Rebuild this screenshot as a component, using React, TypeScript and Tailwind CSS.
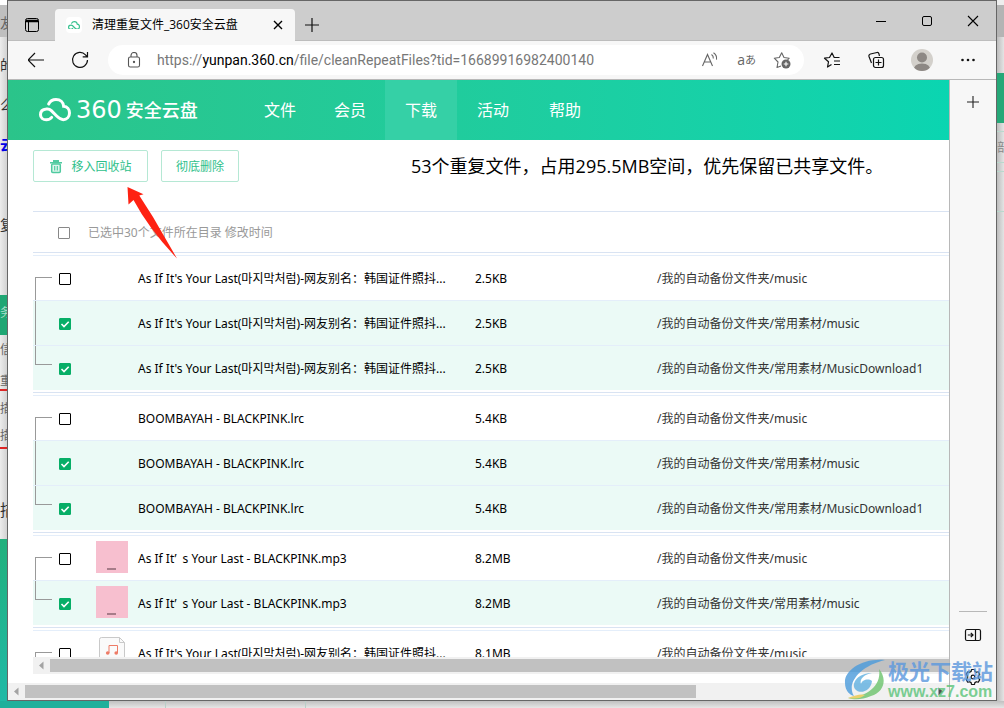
import { useState } from "react";
import type { ReactNode } from "react";

interface RepeatFile {
  id: string;
  name: string;
  size: string;
  path: string;
  thumb?: "cover" | "audio";
}

const ROOT = "/我的自动备份文件夹";
const LONG_NAME = "As If It's Your Last(마지막처럼)-网友别名：韩国证件照抖...";
const MP3_NAME = "As If It’\u2002s Your Last - BLACKPINK.mp3";

const groups: RepeatFile[][] = [
  [
    { id: "a1", name: LONG_NAME, size: "2.5KB", path: `${ROOT}/music` },
    { id: "a2", name: LONG_NAME, size: "2.5KB", path: `${ROOT}/常用素材/music` },
    { id: "a3", name: LONG_NAME, size: "2.5KB", path: `${ROOT}/常用素材/MusicDownload1` },
  ],
  [
    { id: "b1", name: "BOOMBAYAH - BLACKPINK.lrc", size: "5.4KB", path: `${ROOT}/music` },
    { id: "b2", name: "BOOMBAYAH - BLACKPINK.lrc", size: "5.4KB", path: `${ROOT}/常用素材/music` },
    { id: "b3", name: "BOOMBAYAH - BLACKPINK.lrc", size: "5.4KB", path: `${ROOT}/常用素材/MusicDownload1` },
  ],
  [
    { id: "c1", name: MP3_NAME, size: "8.2MB", path: `${ROOT}/music`, thumb: "cover" },
    { id: "c2", name: MP3_NAME, size: "8.2MB", path: `${ROOT}/常用素材/music`, thumb: "cover" },
  ],
  [
    { id: "d1", name: LONG_NAME, size: "8.1MB", path: `${ROOT}/music`, thumb: "audio" },
    { id: "d2", name: LONG_NAME, size: "8.1MB", path: `${ROOT}/常用素材/music`, thumb: "audio" },
  ],
];

const navItems = ["文件", "会员", "下载", "活动", "帮助"];

function CloudMark({ className }: { className: string }) {
  return (
    <svg viewBox="0 0 96 70" className={className} fill="none" stroke="currentColor" strokeWidth="9" strokeLinecap="round">
      <path d="M29 18 C34 8 42 4.500 51 4.500 C64 4.500 73 13 74 25 C85 26 91.500 35 91.500 45 C91.500 57 83 65 73 65 C64 65 59 60 53 54 L37 38 C33 34 28 32 22 33 C11 34 4.500 41 4.500 50 C4.500 59 12 65.500 22 65.500 C29 65.500 34 63 38 58" />
    </svg>
  );
}

function IconButton({ label, className = "", children }: { label: string; className?: string; children: ReactNode }) {
  return (
    <button type="button" aria-label={label} className={`flex size-4 shrink-0 items-center justify-center ${className}`}>
      {children}
    </button>
  );
}

function TitleBar() {
  return (
    <div className="flex h-10 shrink-0 items-center border-b border-[#bdbdbd] bg-[#cdcdcd] pl-4">
      <IconButton label="标签页操作" className="mt-2">
        <svg viewBox="0 0 16 16" className="size-4 shrink-0" fill="none" stroke="#000">
          <rect x="1.500" y="1.500" width="13" height="13" rx="2" />
          <path d="M2 3.500h12M2 4.500h12" strokeWidth="1.500" />
          <path d="M4.500 5v9" />
        </svg>
      </IconButton>
      <div className="-mb-px ml-[15px] flex h-8 w-60 shrink-0 items-center self-end rounded-t bg-[#f7f7f7] pr-[11px] pl-[11px]">
        <span className="flex size-4 items-center justify-center rounded bg-white text-[#35c18e]">
          <CloudMark className="w-3" />
        </span>
        <span className="ml-[10px] flex-1 text-xs whitespace-nowrap text-black">清理重复文件_360安全云盘</span>
        <button type="button" aria-label="关闭标签页" className="flex size-3 items-center justify-center">
          <svg viewBox="0 0 10 10" className="size-[10px]" stroke="#000" strokeWidth="1.400">
            <path d="M1 1l8 8M9 1l-8 8" />
          </svg>
        </button>
      </div>
      <IconButton label="新建标签页" className="mt-2 ml-[9px]">
        <svg viewBox="0 0 16 16" className="size-4" stroke="#111" strokeWidth="1.200">
          <path d="M1 8h14M8 1v14" />
        </svg>
      </IconButton>
      <div className="ml-auto flex gap-[30px] pr-[15px]">
        <IconButton label="最小化">
          <svg viewBox="0 0 16 16" className="size-4" stroke="#000">
            <path d="M3 8.500h10" />
          </svg>
        </IconButton>
        <IconButton label="最大化">
          <svg viewBox="0 0 16 16" className="size-4" stroke="#000" fill="none">
            <rect x="3.500" y="3.500" width="9" height="9" rx="1.500" />
          </svg>
        </IconButton>
        <IconButton label="关闭">
          <svg viewBox="0 0 16 16" className="size-4" stroke="#000" strokeWidth="1.100">
            <path d="M3 3l10 10M13 3L3 13" />
          </svg>
        </IconButton>
      </div>
    </div>
  );
}

function AddressBar() {
  return (
    <div className="flex h-[39px] shrink-0 items-center border-b border-[#b8b8b8] bg-[#f7f7f7] px-5">
      <IconButton label="后退">
        <svg viewBox="0 0 16 16" className="size-4" stroke="#111" strokeWidth="1.200" fill="none">
          <path d="M0 8h16M7 1L0 8l7 7" />
        </svg>
      </IconButton>
      <IconButton label="刷新" className="ml-7">
        <svg viewBox="0 0 16 16" className="size-4 overflow-visible" stroke="#111" strokeWidth="1.200" fill="none">
          <path d="M15.500 8A7.500 7.500 0 1 1 13.500 2.800L15 4.500M15.500 0v4.800h-4.800" />
        </svg>
      </IconButton>
      <div className="ml-5 flex h-[30px] min-w-0 flex-1 items-center rounded-full bg-white pr-[14px] pl-[18px]">
        <svg viewBox="0 0 16 16" className="size-4 shrink-0" stroke="#555" strokeWidth="1.100" fill="none">
          <rect x="2.500" y="5" width="11" height="10" rx="1.800" />
          <path d="M5 5V3.500a3 3 0 0 1 6 0V5" />
          <circle cx="8" cy="10" r=".6" fill="#555" />
        </svg>
        <div className="ml-[15px] min-w-0 flex-1 truncate font-[Roboto] text-sm text-[#777]">
          https://<span className="text-black">yunpan.360.cn</span>/file/cleanRepeatFiles?tid=16689916982400140
        </div>
        <IconButton label="大声朗读" className="mr-[19px]">
          <svg viewBox="0 0 16 16" className="size-4 overflow-visible" stroke="#666" strokeWidth="1.100" fill="none">
            <path d="M.5 14L5.500 2.500L10.500 14M2.200 10h6.600M9.500 2.500c1.500 1 2 2.500 1.800 4M11.500.7c2.500 1.600 3.500 4 3 7" />
          </svg>
        </IconButton>
        <button type="button" aria-label="翻译" className="mr-[18px] flex items-center text-[#666]">
          <span className="text-sm leading-4">a</span>
          <span className="text-[11px] leading-4">あ</span>
        </button>
        <IconButton label="添加到收藏夹">
          <svg viewBox="0 0 16 16" className="size-4 overflow-visible" stroke="#666" strokeWidth="1.100" fill="none" strokeLinejoin="round">
            <path d="M7 14l-4 1.500 1-5.500L.3 6.200l5-.7L7.700.8l2.300 4.700 5.200.7-1.600 1.600" />
            <circle cx="12" cy="12" r="4.500" fill="#666" stroke="none" />
            <path d="M9.700 12h4.600M12 9.700v4.600" stroke="#fff" />
          </svg>
        </IconButton>
      </div>
      <div className="flex items-center pl-5">
        <IconButton label="收藏夹">
          <svg viewBox="0 0 16 16" className="size-4 overflow-visible" stroke="#111" strokeWidth="1.200" fill="none" strokeLinejoin="round">
            <path d="M7.500 12.500L3.500 15l1-5.200L.5 6.200l5-.7L8 1l2.200 4.500h5.300M10 9h6M10 12.500h6" />
          </svg>
        </IconButton>
        <IconButton label="集锦" className="ml-7">
          <svg viewBox="0 0 16 16" className="size-4 overflow-visible" stroke="#111" strokeWidth="1.200" fill="none">
            <path d="M3.500 11L1 4.500Q.5 2.500 2.500 2L9 .5q1.500-.3 2 1.500l.4 2" />
            <rect x="5.500" y="5.500" width="10" height="10" rx="2" fill="#f7f7f7" />
            <path d="M10.500 7.500v6M7.500 10.500h6" />
          </svg>
        </IconButton>
        <button type="button" aria-label="个人资料" className="ml-[27px]">
          <svg viewBox="0 0 22 22" className="size-[22px] rounded-full">
            <rect width="22" height="22" fill="#d3d0cb" />
            <circle cx="11" cy="8.500" r="5" fill="#8d8884" />
            <path d="M2.500 22q0-7.500 8.500-7.500T19.500 22z" fill="#8d8884" />
          </svg>
        </button>
        <IconButton label="设置及其他" className="ml-[27px]">
          <svg viewBox="0 0 16 16" className="size-4" fill="#111">
            <circle cx="2.500" cy="8" r="1.300" />
            <circle cx="8" cy="8" r="1.300" />
            <circle cx="13.500" cy="8" r="1.300" />
          </svg>
        </IconButton>
      </div>
    </div>
  );
}

function SiteHeader() {
  return (
    <header className="flex h-[60px] shrink-0 items-center bg-linear-to-r from-[#2bc48a] to-[#0ad5b1] pl-[31px] text-white">
      <a href="#home" className="flex w-[206px] shrink-0 items-center gap-[5px] whitespace-nowrap">
        <CloudMark className="w-8" />
        <span className="flex items-center">
          <span className="font-[DejaVu_Sans] text-2xl leading-6">360</span>
          <span className="ml-1 text-lg leading-6 font-medium">安全云盘</span>
        </span>
      </a>
      <nav className="flex h-full text-base">
        {navItems.map((item) => (
          <a
            key={item}
            href={`#${item}`}
            className={`flex items-center justify-center px-5 first:px-[19px] nth-2:px-[19px] ${item === "下载" ? "bg-[#35d0a6]" : ""}`}
          >
            {item}
          </a>
        ))}
      </nav>
    </header>
  );
}

function ActionBar() {
  return (
    <div className="flex h-[71px] shrink-0 items-start pt-[10px] pl-[25px]">
      <button
        type="button"
        className="flex h-8 w-[115px] shrink-0 items-center justify-center gap-2 rounded-xs border border-[#b5e8d4] pt-0.5 text-xs text-[#2fbf8b]"
      >
        <svg viewBox="0 0 14 14" className="size-[14px]">
          <path d="M4 0h6v2h3v1.500H1V2h3z" fill="#4fcaa0" />
          <rect x="2.700" y="4" width="8.600" height="8.500" rx="1" fill="#dff6ed" stroke="#4fcaa0" strokeWidth="1.500" />
          <path d="M5.700 6v4.500M8.300 6v4.500" stroke="#4fcaa0" strokeWidth="1.200" />
        </svg>
        移入回收站
      </button>
      <button
        type="button"
        className="ml-[13px] flex h-8 w-[78px] shrink-0 items-center justify-center rounded-xs border border-[#b5e8d4] pt-0.5 text-xs text-[#2fbf8b]"
      >
        彻底删除
      </button>
      <h1 className="ml-[172px] text-lg leading-8 whitespace-nowrap text-black">
        53个重复文件，占用295.5MB空间，优先保留已共享文件。
      </h1>
    </div>
  );
}

interface TickProps {
  label: string;
  checked: boolean;
  muted?: boolean;
  onChange: () => void;
}

function Tick({ label, checked, muted, onChange }: TickProps) {
  return (
    <span className="grid size-3">
      <input
        type="checkbox"
        aria-label={label}
        checked={checked}
        onChange={onChange}
        className={`size-3 appearance-none rounded-[1px] border bg-white [grid-area:1/1] checked:border-[#07ae67] checked:bg-[#07ae67] ${
          muted ? "border-[#888]" : "border-black"
        }`}
      />
      {checked && (
        <svg viewBox="0 0 12 12" className="pointer-events-none size-3 [grid-area:1/1]" fill="none" stroke="#fff" strokeWidth="1.600">
          <path d="M2.500 6l2.500 2.500L9.700 3.800" />
        </svg>
      )}
    </span>
  );
}

function Thumb({ kind }: { kind: "cover" | "audio" }) {
  if (kind === "cover") {
    return (
      <svg viewBox="0 0 32 32" className="size-8">
        <rect width="32" height="32" fill="#f7bfcf" />
        <path d="M11 28h9" stroke="#8d6672" strokeWidth="1.500" />
      </svg>
    );
  }
  return (
    <svg viewBox="0 0 32 32" className="size-8" fill="none">
      <path d="M3.500 3.500q0-2 2-2h18l5 5v22q0 2-2 2h-21q-2 0-2-2z" fill="#fafafa" stroke="#c9c9c9" />
      <path d="M23.500 1.500v5h5" stroke="#c9c9c9" />
      <path d="M13 17V9.500h8.500V17" stroke="#ee7b66" />
      <circle cx="11.700" cy="17" r="1.800" fill="#ee7b66" />
      <circle cx="20.200" cy="17" r="1.800" fill="#ee7b66" />
    </svg>
  );
}

function Bracket({ place }: { place: "first" | "middle" | "last" }) {
  if (place === "first") return <div className="mt-[21px] ml-0.5 h-[23px] w-[17px] border-t border-l border-[#999]" />;
  if (place === "last") return <div className="mb-[25px] ml-0.5 h-[19px] w-[17px] border-b border-l border-[#999]" />;
  return <div className="ml-0.5 h-11 border-l border-[#999]" />;
}

function FileTable() {
  const [selected, setSelected] = useState<Set<string>>(new Set(["a2", "a3", "b2", "b3", "c2", "d2"]));

  const toggle = (id: string) => {
    const next = new Set(selected);
    if (!next.delete(id)) next.add(id);
    setSelected(next);
  };

  const allIds = groups.flat().map((file) => file.id);
  const allSelected = allIds.every((id) => selected.has(id));

  return (
    <div className="min-h-0 flex-1 overflow-hidden">
      <table className="w-full table-fixed border-separate border-spacing-0 font-['Noto_Sans','Noto_Sans_CJK_SC','Noto_Sans_CJK_KR',sans-serif] text-xs whitespace-nowrap">
        <colgroup>
          <col className="w-5" />
          <col className="w-[35px]" />
          <col className="w-[50px]" />
          <col className="w-[337px]" />
          <col className="w-[182px]" />
          <col />
        </colgroup>
        <thead>
          <tr className="h-[41px]">
            <th colSpan={2} className="border-t border-[#d9e3f2] p-0 pt-0.5 pl-[25px]">
              <Tick
                label="全选"
                muted
                checked={allSelected}
                onChange={() => setSelected(new Set(allSelected ? [] : allIds))}
              />
            </th>
            <th colSpan={4} className="border-t border-[#d9e3f2] p-0 pt-0.5 text-left font-normal text-[#999]">
              已选中30个文件所在目录 修改时间
            </th>
          </tr>
          <tr className="h-[3px]">
            <td colSpan={6} className="border-t border-[#d9e3f2] p-0" />
          </tr>
        </thead>
        {groups.map((files) => (
          <tbody key={files[0].id}>
            {files.map((file, i) => {
              const checked = selected.has(file.id);
              return (
                <tr key={file.id} className={`h-[45px] *:border-t *:border-[#e4eefa] ${checked ? "bg-[#ebfaf6]" : ""}`}>
                  <td className="p-0">
                    <Bracket place={i === 0 ? "first" : i === files.length - 1 ? "last" : "middle"} />
                  </td>
                  <td className="p-0 pt-0.5 pl-[6px]">
                    <Tick label={`${file.name} ${file.path}`} checked={checked} onChange={() => toggle(file.id)} />
                  </td>
                  <td className="p-0 pb-0.5 pl-2">{file.thumb && <Thumb kind={file.thumb} />}</td>
                  <td className="p-0 pt-0.5 text-black">{file.name}</td>
                  <td className="p-0 pt-0.5 text-black">{file.size}</td>
                  <td className="p-0 pt-0.5 text-[#333]">{file.path}</td>
                </tr>
              );
            })}
            <tr className="h-[5px]">
              <td colSpan={6} className="p-0 pt-0.5">
                <div className="h-[3px] border-t border-[#d9e3f2]" />
              </td>
            </tr>
          </tbody>
        ))}
      </table>
    </div>
  );
}

function ScrollArrow({ flip }: { flip?: boolean }) {
  return (
    <svg viewBox="0 0 17 17" className={`size-[17px] shrink-0 ${flip ? "rotate-180" : ""}`}>
      <path d="M10.500 4.500v8L6 8.500z" fill={flip ? "#505050" : "#a3a3a3"} />
    </svg>
  );
}

function Page() {
  return (
    <main className="flex min-w-0 flex-1 flex-col bg-white">
      <SiteHeader />
      <ActionBar />
      <div className="flex min-h-0 flex-1 flex-col pl-[25px]">
        <FileTable />
        <div className="flex h-[17px] shrink-0 items-center bg-[#f1f1f1]">
          <ScrollArrow />
          <div className="h-[13px] flex-1 bg-[#c1c1c1]" />
        </div>
      </div>
      <div className="mt-[9px] flex h-[17px] shrink-0 items-center bg-[#f1f1f1]">
        <ScrollArrow />
        <div className="flex-1">
          <div className="h-[13px] w-[74%] bg-[#c1c1c1]" />
        </div>
        <ScrollArrow flip />
      </div>
    </main>
  );
}

function SideBar() {
  return (
    <aside className="flex w-[47px] shrink-0 flex-col items-center border-l border-[#b8b8b8] bg-[#f7f7f7] pt-[14px] pb-[15px]">
      <IconButton label="添加应用">
        <svg viewBox="0 0 16 16" className="size-4" stroke="#222" strokeWidth="1.100">
          <path d="M2 8h12M8 2v12" />
        </svg>
      </IconButton>
      <div className="mt-auto mb-[15px] h-px w-7 bg-[#b8b8b8]" />
      <IconButton label="隐藏侧边栏">
        <svg viewBox="0 0 16 16" className="size-4 overflow-visible" stroke="#111" strokeWidth="1.200" fill="none">
          <rect x=".5" y="2.500" width="15" height="11" rx="1.500" />
          <path d="M10.500 2.500v11M2.800 8h5M5.800 5.800L8 8l-2.200 2.200" />
        </svg>
      </IconButton>
      <IconButton label="设置" className="mt-[26px]">
        <svg viewBox="0 0 24 24" className="size-[18px] shrink-0" stroke="#111" strokeWidth="1.600" fill="none">
          <path d="M9.500 4.500L10 2h4l.5 2.500 2 1.200L19 5l2 3.500-1.800 1.800v3.400L21 15.500 19 19l-2.500-.7-2 1.200L14 22h-4l-.5-2.500-2-1.200L5 19l-2-3.500 1.800-1.800v-3.400L3 8.500 5 5l2.500.7z" strokeLinejoin="round" />
          <circle cx="12" cy="12" r="2.500" />
        </svg>
      </IconButton>
    </aside>
  );
}

// Slices of the page that stays open behind the browser window.
function LeftEdge() {
  return (
    <div className="flex w-[7px] shrink-0 flex-col overflow-hidden bg-linear-to-r from-[#ececec] to-[#d2d2d2] text-sm leading-5 whitespace-nowrap text-[#333]">
      <div className="h-[5px] bg-white" />
      <div className="h-8 bg-[#bfbfbf] pt-2 text-[#666]">友</div>
      <div className="h-10 pt-[18px]">的</div>
      <div className="h-10 pt-[18px]">么</div>
      <div className="h-[98px] pt-[18px] font-bold text-[#0000e6]">云</div>
      <div className="h-20">复</div>
      <div className="h-10 bg-[#1fa673] pt-[10px] text-xs text-[#a6dcc7]">务</div>
      <div className="h-8 pt-[7px] text-xs text-[#666]">信</div>
      <div className="h-[22px] pt-[6px] text-xs text-[#666]">重</div>
      <div className="h-[60px] border-y-2 border-[#dc2626] pt-1 text-xs leading-[27px] text-[#666]">
        描<br />描
      </div>
      <div className="h-[90px] pt-[49px] text-base">描</div>
      <div className="flex-1 bg-linear-to-b from-[#22b07c] to-[#20b9a6]" />
    </div>
  );
}

function RightEdge() {
  return (
    <div className="flex w-[7px] shrink-0 flex-col overflow-hidden bg-linear-to-r from-[#bdbdbd] to-[#e4e4e4] text-xs whitespace-nowrap">
      <div className="h-[5px] bg-[#eee]" />
      <div className="h-8 bg-[#b4b4b4]" />
      <div className="h-9" />
      <div className="h-[50px] bg-[#26a878]" />
      <div className="mt-2 h-8 border-y border-[#b9d8cc] pt-2 text-[#888]">部</div>
      <div className="mt-2 h-[41px] border-y border-[#b9d8cc]" />
    </div>
  );
}

function BottomEdge() {
  return (
    <div className="flex h-[7px] shrink-0 bg-linear-to-b from-[#c0c0c0] to-[#e6e6e6]">
      <div className="w-[109px] bg-[#1fb09b]" />
      <div className="w-[57px] border-r border-[#b9cfc8]" />
      <div className="w-[140px] border-r border-[#b9cfc8]" />
    </div>
  );
}

function RedArrow() {
  return (
    <svg viewBox="0 0 50 72" className="pointer-events-none absolute top-[187px] left-[127px] h-[72px] w-[50px]">
      <path d="M.5 0L16.500 7.300 12.300 8.500 26 30 50 71.500Q22 42 6.500 13L1.500 17.500z" fill="#fe2212" />
    </svg>
  );
}

function Watermark() {
  return (
    <div className="pointer-events-none absolute right-[11px] bottom-[7px] flex items-center gap-[3px] opacity-80">
      <svg viewBox="0 0 41 42" className="h-[42px] w-[41px]">
        <path d="M41 1C17-1 0 12 1 24 1 32 6 36 10 37 2 24 16 7 41 1z" fill="#4a9bdc" />
        <path d="M28 14C14 14 7 24 11 30c5 6 16 2 17-8-4-3-10-1-11 3-2-5 4-10 11-11z" fill="#5fb0e0" />
        <path d="M35 10c8 9 6 23-8 27C18 41 10 41 4 39 20 38 38 29 35 10z" fill="#6cc46c" />
        <path d="M4 39q12-5 17-3-6 5-17 3z" fill="#e9c84b" />
      </svg>
      <div className="font-bold whitespace-nowrap">
        <div className="text-[21px] leading-6 text-[#5b98de]">极光下载站</div>
        <div className="font-['Liberation_Sans'] text-base leading-[18px] text-[#5cc47a]">www.xz7.com</div>
      </div>
    </div>
  );
}

export default function App() {
  return (
    <div className="relative flex h-screen flex-col overflow-hidden bg-[#e3e3e3] font-['Open_Sans','Noto_Sans_CJK_SC','Noto_Sans_CJK_KR',sans-serif]">
      <div className="flex min-h-0 flex-1">
        <LeftEdge />
        <div className="flex min-w-0 flex-1 flex-col border border-[#666]">
          <TitleBar />
          <AddressBar />
          <div className="flex min-h-0 flex-1">
            <Page />
            <SideBar />
          </div>
        </div>
        <RightEdge />
      </div>
      <BottomEdge />
      <RedArrow />
      <Watermark />
    </div>
  );
}
